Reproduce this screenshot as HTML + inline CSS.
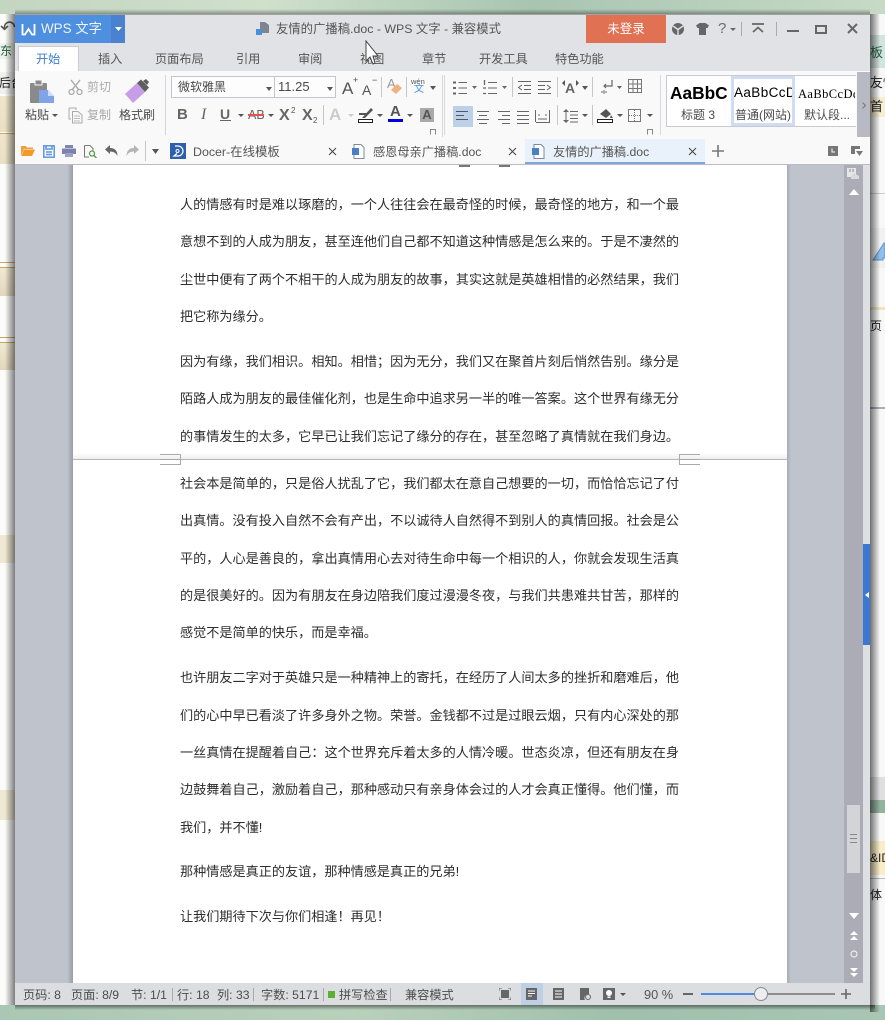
<!DOCTYPE html>
<html lang="zh"><head><meta charset="utf-8"><title>WPS 文字</title>
<style>
html,body{margin:0;padding:0;width:885px;height:1020px;overflow:hidden;background:#fff}
body{position:relative;font-family:"Liberation Sans","Noto Sans CJK SC",sans-serif;color:#444}
div,span,svg{position:absolute}
.l{white-space:nowrap;font-size:12px;line-height:16px;color:#4a4a4a}
.t{left:180px;width:499px;height:20px;margin-top:1px;line-height:20px;font-size:13.13px;color:#2e2e2e;white-space:nowrap;text-align:justify;text-align-last:justify;text-justify:inter-character}
.n{text-align-last:left}
.tab{font-size:12.2px;top:51px;line-height:16px;color:#555;white-space:nowrap}
.s{top:987px;font-size:12.2px;line-height:16px;color:#4c4c4c;white-space:nowrap}
.sep{width:1px;background:#c5c6ca}
</style></head><body>
<!-- background behind -->
<div style="left:0;top:0;width:885px;height:1020px;background:#fff"></div>
<div style="left:0;top:0;width:885px;height:14px;background:linear-gradient(90deg,#c3d6c2,#cfe0cb 30%,#a8c5b2 60%,#c7dac6)"></div>
<div style="left:0;top:1005px;width:885px;height:15px;background:linear-gradient(90deg,#a9c7b4,#b9d0bb 40%,#9fc0ac 70%,#a8c6b3)"></div>
<div style="left:0;top:14px;width:15px;height:991px;background:#fbfbfa"></div>
<div style="left:0;top:14px;width:15px;height:30px;font-size:19px;line-height:30px;color:#555;overflow:hidden">↶</div>
<div style="left:0;top:43px;width:15px;height:16px;background:#eef3ea;font-size:12px;line-height:16px;overflow:hidden;color:#264;white-space:nowrap">东</div>
<div style="left:0;top:72px;width:15px;height:22px;background:#f0f0ee;font-size:12px;line-height:22px;overflow:hidden;color:#222;white-space:nowrap;text-indent:-1px">后台</div>
<div style="left:0;top:96px;width:15px;height:36px;background:linear-gradient(#efe6cc,#e9dfc4)"></div>
<div style="left:0;top:133px;width:15px;height:1px;background:#c9a85e"></div>
<div style="left:0;top:134px;width:15px;height:30px;background:linear-gradient(#efe6cc,#e9dfc4)"></div>
<div style="left:0;top:262px;width:15px;height:1px;background:#c9a85e"></div>
<div style="left:0;top:267px;width:15px;height:28px;background:linear-gradient(#f1e9d2,#e0d7bd);border-top:1px solid #c9a85e"></div>
<div style="left:0;top:337px;width:15px;height:1px;background:#c9a85e"></div>
<div style="left:0;top:342px;width:15px;height:27px;background:linear-gradient(#f1e9d2,#e0d7bd);border-top:1px solid #c9a85e"></div>
<div style="left:0;top:535px;width:15px;height:28px;background:#efe8d3"></div>
<div style="left:0;top:790px;width:15px;height:30px;background:#efe8d3"></div>
<div style="left:870px;top:14px;width:15px;height:991px;background:#f8f8f8"></div>
<div style="left:870px;top:35px;width:15px;height:33px;background:#d3e3dd;font-size:13px;line-height:36px;color:#264;overflow:hidden;white-space:nowrap">板</div>
<div style="left:870px;top:70px;width:15px;height:26px;font-size:13px;line-height:26px;color:#222;overflow:hidden;white-space:nowrap">友情</div>
<div style="left:870px;top:97px;width:15px;height:20px;background:#f6eed0;font-size:13px;line-height:20px;color:#222;overflow:hidden;white-space:nowrap">首</div>
<div style="left:870px;top:193px;width:15px;height:1px;background:#ccc"></div>
<div style="left:870px;top:228px;width:15px;height:40px;background:#f1f1f2"></div>
<svg style="left:870px;top:240px" width="15" height="22"><path d="M3 20 L14 3 L15 3 L15 18 L13 18 L13 20Z" fill="#8fc0ea" stroke="#5a92c8"/></svg>
<div style="left:870px;top:307px;width:15px;height:3px;background:#efe3b8"></div>
<div style="left:870px;top:316px;width:15px;height:20px;font-size:12px;line-height:20px;color:#222;overflow:hidden;white-space:nowrap">页 ▾</div>
<div style="left:870px;top:407px;width:15px;height:2px;background:#a8adb8"></div>
<div style="left:870px;top:777px;width:15px;height:23px;background:#dfdfe1"></div>
<div style="left:870px;top:800px;width:15px;height:13px;background:#93b39f"></div>
<div style="left:870px;top:841px;width:15px;height:34px;background:#f8edc8;font-size:12px;line-height:34px;color:#222;overflow:hidden;white-space:nowrap">&amp;ID</div>
<div style="left:870px;top:878px;width:15px;height:1px;background:#bbb"></div>
<div style="left:870px;top:884px;width:15px;height:22px;font-size:12px;line-height:22px;color:#222;overflow:hidden;white-space:nowrap">体</div>
<!-- shadows -->
<div style="left:5px;top:14px;width:10px;height:991px;background:linear-gradient(90deg,rgba(0,0,0,0),rgba(0,0,0,.5))"></div>
<div style="left:870px;top:14px;width:10px;height:998px;background:linear-gradient(90deg,rgba(0,0,0,.55),rgba(0,0,0,0))"></div>
<div style="left:15px;top:1005px;width:860px;height:5px;background:linear-gradient(rgba(0,0,0,.45),rgba(0,0,0,0))"></div>
<div style="left:15px;top:9px;width:855px;height:6px;background:linear-gradient(rgba(0,0,0,0),rgba(0,0,0,.4))"></div>

<!-- window -->
<div style="left:15px;top:15px;width:855px;height:990px;background:#e1e2e5"></div>
<div style="left:15px;top:15px;width:96px;height:28px;background:#4f8fdf"></div>
<div style="left:111px;top:15px;width:14px;height:28px;background:#4a82cf"></div>
<svg style="left:21px;top:23px" width="15" height="13"><path d="M1.500 1 V11.500 H4 L7.500 6 L11 11.500 H13.500 V1" fill="none" stroke="#fff" stroke-width="1.800"/></svg>
<div class="l" style="left:41px;top:21px;color:#eef4fc;font-size:13.400px">WPS 文字</div>
<svg style="left:115px;top:27px" width="7" height="4"><path d="M0 0H7L3.500 4Z" fill="#fff"/></svg>
<svg style="left:255px;top:21px" width="15" height="15"><path d="M5 1H10L14 4V12H5Z" fill="#7e8591"/><rect x="1" y="8" width="6" height="6" fill="#4a90d9"/></svg>
<div class="l" style="left:276px;top:21px;font-size:12.350px;color:#555">友情的广播稿.doc - WPS 文字 - 兼容模式</div>
<div style="left:586px;top:15px;width:80px;height:28px;background:#e07153;color:#fff;font-size:12.500px;line-height:28px;text-align:center">未登录</div>
<svg style="left:671px;top:22px" width="14" height="14"><circle cx="7" cy="7" r="6" fill="#666"/><path d="M2 4L7 7.500L12 4M7 7.500V13" stroke="#e1e2e5" stroke-width="1.400" fill="none"/></svg>
<svg style="left:696px;top:23px" width="13" height="12"><path d="M3.500 0H9.500L13 2.500L11.500 5H10V12H3V5H1.500L0 2.500Z" fill="#666"/></svg>
<div style="left:718px;top:20px;font-size:15px;line-height:18px;color:#6a6a6a">?</div>
<svg style="left:730px;top:28px" width="6" height="3"><path d="M0 0H6L3 3Z" fill="#666"/></svg>
<div class="sep" style="left:741px;top:22px;height:14px;background:#aaa"></div>
<svg style="left:752px;top:23px" width="12" height="11"><path d="M0 1H12M1 9L6 4.500L11 9" stroke="#666" stroke-width="1.700" fill="none"/></svg>
<div class="sep" style="left:776px;top:22px;height:14px;background:#aaa"></div>
<div style="left:787px;top:30px;width:12px;height:2px;background:#666"></div>
<div style="left:815px;top:25px;width:8px;height:5px;border:2px solid #666;border-top-width:2px"></div>
<svg style="left:847px;top:23px" width="11" height="11"><path d="M1 1L10 10M10 1L1 10" stroke="#666" stroke-width="2"/></svg>

<!-- tabs -->
<div style="left:18px;top:46px;width:61px;height:25px;background:#fff;border:1px solid #c9cbd0;border-bottom:0;box-sizing:border-box"></div>
<div class="tab" style="left:36px;color:#3f80cc">开始</div>
<div class="tab" style="left:98px">插入</div>
<div class="tab" style="left:155px">页面布局</div>
<div class="tab" style="left:236px">引用</div>
<div class="tab" style="left:298px">审阅</div>
<div class="tab" style="left:360px">视图</div>
<div class="tab" style="left:422px">章节</div>
<div class="tab" style="left:479px">开发工具</div>
<div class="tab" style="left:555px">特色功能</div>
<svg style="left:365px;top:40px" width="14" height="26"><path d="M1 1V21L5 17L8 24L10 23L8 16H13Z" fill="#fff" stroke="#444" stroke-width="1"/></svg>

<!-- ribbon -->
<div style="left:15px;top:71px;width:855px;height:67px;background:#f9f9fa"></div>
<div style="left:15px;top:138px;width:855px;height:26px;background:#f9f9fa"></div>
<div style="left:15px;top:164px;width:855px;height:1px;background:#b9bcc6"></div>

<svg style="left:29px;top:79px" width="26" height="25"><rect x="1" y="4" width="17" height="20" rx="1" fill="#8a8a8a"/><rect x="6" y="1" width="7" height="5" fill="#8a8a8a" stroke="#f9f9fa"/><path d="M10 11H19L25 17V24H10Z" fill="#7fa4e8"/><path d="M19 11V17H25" fill="#cfdcf6"/></svg>
<div class="l" style="left:25px;top:107px">粘贴</div>
<svg style="left:52px;top:114px" width="6" height="3"><path d="M0 0H6L3 3Z" fill="#555"/></svg>
<svg style="left:68px;top:79px" width="15" height="16"><path d="M3 1L11 11M12 1L4 11" stroke="#b0b0b0" stroke-width="1.500"/><circle cx="3.500" cy="13" r="2.500" fill="none" stroke="#aaa" stroke-width="1.300"/><circle cx="11.500" cy="13" r="2.500" fill="none" stroke="#aaa" stroke-width="1.300"/></svg>
<div class="l" style="left:87px;top:79px;color:#aaa">剪切</div>
<svg style="left:68px;top:107px" width="15" height="17"><path d="M1 1H8V3M1 1V12H3" fill="none" stroke="#aaa"/><path d="M4.500 4.500H10L14 8V16H4.500Z" fill="#f9f9fa" stroke="#aaa"/><path d="M6 9H12M6 11.500H12M6 14H12" stroke="#bbb"/></svg>
<div class="l" style="left:87px;top:107px;color:#aaa">复制</div>
<svg style="left:124px;top:78px" width="26" height="26"><path d="M1 16L13 5L21 14L9 25Z" fill="#c79de8"/><path d="M13 5L17 1.500L25 9.500L21 14Z" fill="#5e5e5e"/><path d="M19 3L22 1L25 4L23 7Z" fill="#5e5e5e"/></svg>
<div class="l" style="left:119px;top:107px">格式刷</div>
<div class="sep" style="left:165px;top:75px;height:60px;background:#d4d5d8"></div>

<div style="left:171px;top:76px;width:165px;height:22px;border:1px solid #c3c5ca;box-sizing:border-box;background:#fdfdfd"></div>
<div class="sep" style="left:274px;top:76px;height:22px"></div>
<div class="l" style="left:178px;top:79px">微软雅黑</div>
<svg style="left:266px;top:87px" width="6" height="4"><path d="M0 0H6L3 4Z" fill="#555"/></svg>
<div class="l" style="left:278px;top:79px;font-size:13px">11.25</div>
<svg style="left:327px;top:87px" width="6" height="4"><path d="M0 0H6L3 4Z" fill="#555"/></svg>
<div class="l" style="left:342px;top:79px;font-size:17px;line-height:20px;color:#555">A</div>
<div class="l" style="left:353px;top:75px;font-size:9px;line-height:10px">+</div>
<div class="l" style="left:362px;top:81px;font-size:14px;line-height:18px;color:#555">A</div>
<div class="l" style="left:372px;top:75px;font-size:9px;line-height:10px">−</div>
<div class="sep" style="left:381px;top:77px;height:20px"></div>
<div class="l" style="left:387px;top:76px;font-size:13px;color:#999">A</div>
<svg style="left:391px;top:84px" width="11" height="10"><path d="M0 6L6 0L11 4L5 10Z" fill="#efb27c"/></svg>
<div class="sep" style="left:406px;top:77px;height:20px"></div>
<div class="l" style="left:411px;top:78px;font-size:7.500px;line-height:8px;color:#555">wén</div>
<div class="l" style="left:414px;top:84px;font-size:10px;line-height:12px;color:#4a90d9">文</div>
<svg style="left:430px;top:86px" width="6" height="4"><path d="M0 0H6L3 4Z" fill="#555"/></svg>
<div class="sep" style="left:442px;top:75px;height:62px;background:#d8d9dc"></div>

<div class="l" style="left:177px;top:107px;font-weight:bold;font-size:15px;color:#666">B</div>
<div class="l" style="left:201px;top:107px;font-family:'Liberation Serif',serif;font-style:italic;font-size:16px;color:#666">I</div>
<div class="l" style="left:220px;top:106px;font-weight:bold;font-size:14px;color:#666">U</div>
<div style="left:220px;top:120px;width:11px;height:1px;background:#666"></div>
<svg style="left:238px;top:114px" width="6" height="3"><path d="M0 0H6L3 3Z" fill="#555"/></svg>
<div class="l" style="left:248px;top:107px;font-size:12.500px;color:#666">AB</div>
<div style="left:248px;top:114px;width:16px;height:2px;background:#e85050"></div>
<svg style="left:268px;top:114px" width="6" height="3"><path d="M0 0H6L3 3Z" fill="#555"/></svg>
<div class="l" style="left:279px;top:108px;font-weight:bold;font-size:16px;color:#666">X</div><div class="l" style="left:291px;top:103px;font-size:8px;color:#555">2</div>
<div class="l" style="left:302px;top:108px;font-weight:bold;font-size:16px;color:#666">X</div><div class="l" style="left:313px;top:113px;font-size:8px;color:#555">2</div>
<div class="sep" style="left:323px;top:105px;height:20px"></div>
<div class="l" style="left:329px;top:107px;font-weight:bold;font-size:17px;color:#ccc">A</div>
<svg style="left:348px;top:114px" width="6" height="3"><path d="M0 0H6L3 3Z" fill="#ccc"/></svg>
<svg style="left:358px;top:106px" width="16" height="14"><path d="M1 8H9" stroke="#555" stroke-width="2"/><path d="M4 12L13 2L15 4L7 12Z" fill="#555"/></svg>
<div style="left:358px;top:119px;width:13px;height:2px;border:1px solid #222;background:#fff"></div>
<svg style="left:377px;top:114px" width="6" height="3"><path d="M0 0H6L3 3Z" fill="#555"/></svg>
<div class="l" style="left:390px;top:104px;font-size:15px;color:#555;font-weight:bold">A</div>
<div style="left:388px;top:119px;width:15px;height:3px;background:#0000d8"></div>
<svg style="left:407px;top:114px" width="6" height="3"><path d="M0 0H6L3 3Z" fill="#555"/></svg>
<div style="left:420px;top:108px;width:14px;height:14px;background:#a9a9aa;color:#555;font-weight:bold;font-size:13px;line-height:14px;text-align:center">A</div>
<svg style="left:430px;top:129px" width="6" height="6"><path d="M.5 5.500V.5H5.500V5.500" fill="none" stroke="#888"/></svg>
<div class="sep" style="left:444px;top:75px;height:60px;background:#d8d9dc"></div>

<!-- list icons -->
<svg style="left:453px;top:79px" width="110" height="18" fill="none" stroke="#666">
<path d="M5.500 3.500H14M5.500 9H14M5.500 14.500H14"/><path d="M0 3.500H3M0 9H3M0 14.500H3" stroke-width="2" stroke-dasharray="1.500 0"/>
<path d="M19 7H24L21.500 10Z" fill="#666" stroke="none"/>
<path d="M35 3.500H44M35 9H44M35 14.500H44"/><path d="M31.500 1V6M30 9H33M30 14.500H33" stroke-width="1.300"/>
<path d="M49 7H54L51.500 10Z" fill="#666" stroke="none"/>
<path d="M65 2.500H78M71 6.500H78M71 10.500H78M65 14.500H78"/><path d="M69 6L65.500 8.500L69 11"/>
<path d="M85 2.500H98M85 6.500H92M85 10.500H92M85 14.500H98"/><path d="M94 6L97.500 8.500L94 11"/>
</svg>
<div class="sep" style="left:512px;top:77px;height:20px"></div>
<div class="sep" style="left:557px;top:77px;height:20px"></div>
<div class="l" style="left:565px;top:80px;font-size:14px;font-weight:bold;color:#666">A</div>
<svg style="left:562px;top:80px" width="17" height="6" fill="#555"><path d="M0 3L3 0V6ZM17 3L14 0V6Z"/></svg>
<svg style="left:582px;top:86px" width="6" height="4"><path d="M0 0H6L3 4Z" fill="#555"/></svg>
<div class="sep" style="left:592px;top:77px;height:20px"></div>
<svg style="left:600px;top:79px" width="24" height="16" fill="none" stroke="#666"><path d="M12 1V7H4M6 5L4 7L6 9" stroke-width="1.200"/><path d="M1 13H3M5 13H7M4 11V15"/><path d="M17 7H22L19.500 10Z" fill="#666" stroke="none"/></svg>
<svg style="left:628px;top:79px" width="14" height="14" fill="none" stroke="#777"><path d="M.5.5H13.500V13.500H.5ZM.5 5H13.500M.5 9.500H13.500M5 .5V13.500M9.500 .5V13.500"/></svg>
<div style="left:453px;top:106px;width:20px;height:21px;background:#bcd0e8"></div>
<svg style="left:456px;top:109px" width="100" height="15" fill="none" stroke="#666">
<path d="M0 2.500H12M0 6.500H8M0 10.500H12" stroke="#556"/>
<path d="M21 2.500H33M23 6.500H31M21 10.500H33M23 14.500H31"/>
<path d="M42 2.500H54M46 6.500H54M42 10.500H54M46 14.500H54"/>
<path d="M61 2.500H73M61 6.500H73M61 10.500H73M61 14.500H73"/>
<path d="M79.500 1V13M93.500 1V13M80 13.500H94M82 6H84M89 6H91M82 10H91" />
</svg>
<div class="sep" style="left:557px;top:105px;height:20px"></div>
<svg style="left:563px;top:109px" width="15" height="14" fill="none" stroke="#666"><path d="M3 0L6 3H0ZM3 14L0 11H6Z" fill="#666" stroke="none"/><rect x="2.500" y="3" width="1" height="8" fill="#666" stroke="none"/><path d="M7 2.500H15M7 6H15M7 9.500H15M7 13H15"/></svg>
<svg style="left:582px;top:114px" width="6" height="3"><path d="M0 0H6L3 3Z" fill="#555"/></svg>
<div class="sep" style="left:592px;top:105px;height:20px"></div>
<svg style="left:597px;top:108px" width="16" height="15"><path d="M3 6L9 1L14 6L9 10Z" fill="#555"/><path d="M14 7L16 10H13Z" fill="#555"/><rect x=".5" y="11.500" width="15" height="3" fill="#fff" stroke="#222"/></svg>
<svg style="left:617px;top:114px" width="6" height="3"><path d="M0 0H6L3 3Z" fill="#555"/></svg>
<svg style="left:628px;top:109px" width="13" height="13" fill="none" stroke="#777"><rect x=".5" y=".5" width="12" height="12"/><path d="M6.500 1V12M1 6.500H12" stroke-dasharray="1 1"/></svg>
<svg style="left:647px;top:114px" width="6" height="3"><path d="M0 0H6L3 3Z" fill="#555"/></svg>
<svg style="left:647px;top:129px" width="6" height="6"><path d="M.5 5.500V.5H5.500V5.500" fill="none" stroke="#888"/></svg>
<div class="sep" style="left:660px;top:75px;height:60px;background:#d8d9dc"></div>

<!-- styles gallery -->
<div style="left:666px;top:75px;width:190px;height:52px;background:#fff;border:1px solid #c9cad0;box-sizing:border-box;border-right:0"></div>
<div style="left:731px;top:76px;width:64px;height:50px;background:#cfdcf4"></div>
<div style="left:734px;top:79px;width:58px;height:44px;background:#fff"></div>
<div style="left:670px;top:82px;font-weight:bold;font-size:17.300px;line-height:22px;color:#000;white-space:nowrap">AaBbC</div>
<div class="l" style="left:681px;top:107px">标题 3</div>
<div style="left:734px;top:84px;width:58px;overflow:hidden;font-size:13.500px;line-height:18px;color:#000;white-space:nowrap;letter-spacing:.4px">AaBbCcD</div>
<div class="l" style="left:735px;top:107px">普通(网站)</div>
<div style="left:798px;top:85px;width:57px;overflow:hidden;font-family:'Liberation Serif',serif;font-size:12.500px;line-height:18px;color:#000;white-space:nowrap;letter-spacing:.4px">AaBbCcDd</div>
<div class="l" style="left:804px;top:107px">默认段...</div>
<div style="left:857px;top:72px;width:13px;height:65px;background:#b7bac3"></div>
<svg style="left:862px;top:102px" width="4" height="7"><path d="M.5.5L3.500 3.500L.5 6.500" fill="none" stroke="#777"/></svg>

<!-- quick access -->
<svg style="left:21px;top:145px" width="14" height="11"><path d="M0 1H5L6 2.500H12V4H3L0 11Z" fill="#f0a040"/><path d="M3 4.500H14L11 11H.5Z" fill="#f29a25"/></svg>
<svg style="left:43px;top:145px" width="12" height="13" fill="none" stroke="#5f96dc" stroke-width="1.500"><rect x=".8" y=".8" width="10.400" height="11.400"/><path d="M3 1V4H9V1M3 7H9M3 9.500H9"/></svg>
<svg style="left:62px;top:145px" width="14" height="12"><rect x="3" y="0" width="8" height="3" fill="#8186ad"/><rect x="0" y="3.500" width="14" height="5.500" fill="#7d82ad"/><rect x="3" y="8" width="8" height="4" fill="#9ea2c2"/></svg>
<svg style="left:84px;top:145px" width="13" height="13"><path d="M.5.5H6L9 3.500V6M.5.5V12H5" fill="none" stroke="#777"/><circle cx="8" cy="8.500" r="2.500" fill="none" stroke="#5aa050" stroke-width="1.300"/><path d="M10 10.500L12.500 13" stroke="#5aa050" stroke-width="1.500"/></svg>
<svg style="left:105px;top:145px" width="13" height="11"><path d="M0 4.500L5 0V3C10 3 12.500 6 12.500 11C11 8 8.500 6.500 5 6.500V9Z" fill="#666"/></svg>
<svg style="left:126px;top:145px" width="13" height="11"><path d="M13 4.500L8 0V3C3 3 .5 6 .5 11C2 8 4.500 6.500 8 6.500V9Z" fill="#b5b5b5"/></svg>
<div class="sep" style="left:145px;top:141px;height:20px"></div>
<svg style="left:152px;top:149px" width="7" height="5"><path d="M0 0H7L3.500 5Z" fill="#555"/></svg>
<div style="left:170px;top:143px;width:16px;height:16px;background:#2d5faa"></div>
<svg style="left:172px;top:145px" width="12" height="12"><path d="M3 1H6C9 1 11 3.500 11 6S9 11 6 11H2L5 8.500" fill="none" stroke="#fff" stroke-width="1.300"/><circle cx="5.500" cy="6" r="1.500" fill="none" stroke="#fff"/></svg>
<div class="l" style="left:193px;top:144px;color:#555;font-size:12.400px">Docer-在线模板</div>
<svg style="left:328px;top:147px" width="9" height="9"><path d="M1 1L8 8M8 1L1 8" stroke="#444"/></svg>
<svg style="left:351px;top:144px" width="14" height="15"><path d="M3 .5H10L13 3.500V14.500H3Z" fill="#fff" stroke="#7d8aa0"/><rect x="1" y="4" width="7" height="7" fill="#4a7fc5"/></svg>
<div class="l" style="left:373px;top:144px;color:#555;font-size:12.200px">感恩母亲广播稿.doc</div>
<svg style="left:508px;top:147px" width="9" height="9"><path d="M1 1L8 8M8 1L1 8" stroke="#444"/></svg>
<div style="left:525px;top:139px;width:180px;height:25px;background:#e9f1fa"></div>
<div style="left:525px;top:162px;width:180px;height:2px;background:#7ea6d8"></div>
<svg style="left:531px;top:144px" width="14" height="15"><path d="M3 .5H10L13 3.500V14.500H3Z" fill="#fff" stroke="#7d8aa0"/><rect x="1" y="4" width="7" height="7" fill="#4a7fc5"/></svg>
<div class="l" style="left:553px;top:144px;color:#555;font-size:12.200px">友情的广播稿.doc</div>
<svg style="left:688px;top:147px" width="9" height="9"><path d="M1 1L8 8M8 1L1 8" stroke="#444"/></svg>
<svg style="left:712px;top:145px" width="12" height="12"><path d="M6 0V12M0 6H12" stroke="#777" stroke-width="1.600"/></svg>
<svg style="left:828px;top:146px" width="10" height="10"><rect width="10" height="10" fill="#777"/><path d="M4 2.500V6H7" stroke="#fff" fill="none"/></svg>
<svg style="left:851px;top:146px" width="12" height="11"><path d="M0 0H9V3H4V8H0Z" fill="#777"/><path d="M5 5H12L8.500 10Z" fill="#777"/></svg>

<!-- doc area -->
<div style="left:15px;top:165px;width:829px;height:818px;background:#bfc3cc"></div>
<div style="left:67px;top:165px;width:6px;height:818px;background:linear-gradient(90deg,rgba(120,125,140,0),rgba(120,125,140,.55))"></div>
<div style="left:787px;top:165px;width:4px;height:818px;background:linear-gradient(90deg,rgba(120,125,140,.35),rgba(120,125,140,0))"></div>
<div style="left:73px;top:165px;width:714px;height:818px;background:#fff"></div>
<div style="left:73px;top:453px;width:714px;height:6px;background:linear-gradient(rgba(0,0,0,0),rgba(0,0,0,.07))"></div>
<div style="left:73px;top:459px;width:714px;height:1px;background:#b7b7bb"></div>
<svg style="left:160px;top:454px" width="21" height="11" fill="none" stroke="#aaa"><path d="M0 .5H20.500V10.500H0M0 5.500H20.500"/></svg>
<svg style="left:679px;top:454px" width="21" height="11" fill="none" stroke="#aaa"><path d="M21 .5H.5V10.500H21M21 5.500H.5"/></svg>
<div style="left:459px;top:165px;width:11px;height:2px;background:#777"></div>
<div style="left:499px;top:165px;width:11px;height:2px;background:#777"></div>

<div class="t" style="top:194px">人的情感有时是难以琢磨的，一个人往往会在最奇怪的时候，最奇怪的地方，和一个最</div>
<div class="t" style="top:231px">意想不到的人成为朋友，甚至连他们自己都不知道这种情感是怎么来的。于是不凄然的</div>
<div class="t" style="top:269px">尘世中便有了两个不相干的人成为朋友的故事，其实这就是英雄相惜的必然结果，我们</div>
<div class="t n" style="top:306px">把它称为缘分。</div>
<div class="t" style="top:351px">因为有缘，我们相识。相知。相惜；因为无分，我们又在聚首片刻后悄然告别。缘分是</div>
<div class="t" style="top:388px">陌路人成为朋友的最佳催化剂，也是生命中追求另一半的唯一答案。这个世界有缘无分</div>
<div class="t" style="top:426px">的事情发生的太多，它早已让我们忘记了缘分的存在，甚至忽略了真情就在我们身边。</div>
<div class="t" style="top:473px">社会本是简单的，只是俗人扰乱了它，我们都太在意自己想要的一切，而恰恰忘记了付</div>
<div class="t" style="top:510px">出真情。没有投入自然不会有产出，不以诚待人自然得不到别人的真情回报。社会是公</div>
<div class="t" style="top:548px">平的，人心是善良的，拿出真情用心去对待生命中每一个相识的人，你就会发现生活真</div>
<div class="t" style="top:585px">的是很美好的。因为有朋友在身边陪我们度过漫漫冬夜，与我们共患难共甘苦，那样的</div>
<div class="t n" style="top:622px">感觉不是简单的快乐，而是幸福。</div>
<div class="t" style="top:667px">也许朋友二字对于英雄只是一种精神上的寄托，在经历了人间太多的挫折和磨难后，他</div>
<div class="t" style="top:705px">们的心中早已看淡了许多身外之物。荣誉。金钱都不过是过眼云烟，只有内心深处的那</div>
<div class="t" style="top:742px">一丝真情在提醒着自己：这个世界充斥着太多的人情冷暖。世态炎凉，但还有朋友在身</div>
<div class="t" style="top:779px">边鼓舞着自己，激励着自己，那种感动只有亲身体会过的人才会真正懂得。他们懂，而</div>
<div class="t n" style="top:817px">我们，并不懂!</div>
<div class="t n" style="top:861px">那种情感是真正的友谊，那种情感是真正的兄弟!</div>
<div class="t n" style="top:906px">让我们期待下次与你们相逢！再见！</div>

<!-- scrollbar -->
<div style="left:844px;top:165px;width:19px;height:818px;background:#abacb6"></div>
<div style="left:863px;top:165px;width:7px;height:818px;background:#dedfe2"></div>
<div style="left:863px;top:544px;width:7px;height:101px;background:#3c78d0"></div>
<svg style="left:865px;top:592px" width="4" height="6"><path d="M4 0V6L0 3Z" fill="#fff"/></svg>
<svg style="left:847px;top:168px" width="12" height="12"><path d="M0 0H9V9H0Z" fill="#e5e6ea"/><path d="M3 1V4M6 1V4" stroke="#888"/><path d="M4 11V8L7 5L12 8V11Z" fill="#d9dade"/></svg>
<svg style="left:849px;top:189px" width="10" height="6"><path d="M5 0L10 6H0Z" fill="#fff"/></svg>
<div style="left:847px;top:805px;width:13px;height:68px;background:#d3d4d8"></div>
<div style="left:850px;top:834px;width:7px;height:1px;background:#888"></div>
<div style="left:850px;top:838px;width:7px;height:1px;background:#888"></div>
<div style="left:850px;top:842px;width:7px;height:1px;background:#888"></div>
<svg style="left:849px;top:913px" width="10" height="6"><path d="M0 0H10L5 6Z" fill="#fff"/></svg>
<svg style="left:850px;top:931px" width="8" height="10" fill="#fff"><path d="M4 0L8 4H0ZM4 5L8 9H0Z"/></svg>
<svg style="left:850px;top:950px" width="8" height="8"><circle cx="4" cy="4" r="3" fill="none" stroke="#eee" stroke-width="1.200"/></svg>
<svg style="left:850px;top:968px" width="8" height="10" fill="#fff"><path d="M0 0H8L4 4ZM0 5H8L4 9Z"/></svg>

<!-- status bar -->
<div style="left:15px;top:983px;width:855px;height:22px;background:#dcdde0"></div>
<div class="s" style="left:23px">页码: 8</div>
<div class="s" style="left:71px">页面: 8/9</div>
<div class="s" style="left:131px">节: 1/1</div>
<div class="sep" style="left:172px;top:988px;height:13px;background:#aaa"></div>
<div class="s" style="left:177px">行: 18</div>
<div class="s" style="left:217px">列: 33</div>
<div class="sep" style="left:253px;top:988px;height:13px;background:#aaa"></div>
<div class="s" style="left:261px">字数: 5171</div>
<div class="sep" style="left:323px;top:988px;height:13px;background:#aaa"></div>
<div style="left:328px;top:991px;width:7px;height:7px;background:#5cb030"></div>
<div class="s" style="left:339px">拼写检查</div>
<div class="sep" style="left:390px;top:988px;height:13px;background:#aaa"></div>
<div class="s" style="left:405px">兼容模式</div>
<svg style="left:499px;top:988px" width="12" height="12"><rect x="2" y="2" width="8" height="8" fill="#666"/><path d="M0 3V0H3M9 0H12V3M12 9V12H9M3 12H0V9" fill="none" stroke="#666"/></svg>
<div style="left:521px;top:983px;width:22px;height:22px;background:#bfd0e6"></div>
<svg style="left:526px;top:988px" width="11" height="12"><rect width="11" height="12" fill="#666"/><path d="M2 3H9M2 5.500H9M2 8H6" stroke="#fff"/></svg>
<svg style="left:553px;top:988px" width="11" height="12"><rect width="11" height="12" fill="#666"/><path d="M2 3H9M2 6H9M2 9H9" stroke="#fff"/></svg>
<svg style="left:580px;top:988px" width="11" height="12"><path d="M0 0H9V6A4 4 0 0 0 5 12H0Z" fill="#666"/><circle cx="8" cy="9" r="2.500" fill="none" stroke="#666"/></svg>
<svg style="left:603px;top:988px" width="12" height="12"><rect width="12" height="12" fill="#666"/><circle cx="6" cy="5" r="3" fill="#fff"/><rect x="4.500" y="8.500" width="3" height="1.500" fill="#fff"/></svg>
<svg style="left:620px;top:993px" width="6" height="3"><path d="M0 0H6L3 3Z" fill="#555"/></svg>
<div class="s" style="left:644px;font-size:12.800px;color:#555">90 %</div>
<div style="left:683px;top:993px;width:10px;height:2px;background:#666"></div>
<div style="left:701px;top:993px;width:60px;height:2px;background:#4a8ae0"></div>
<div style="left:761px;top:993px;width:74px;height:2px;background:#8d8d90"></div>
<div style="left:754px;top:987px;width:12px;height:12px;border-radius:50%;background:#eeeef0;border:1px solid #8b8b8e"></div>
<svg style="left:841px;top:989px" width="10" height="10"><path d="M5 0V10M0 5H10" stroke="#666" stroke-width="1.600"/></svg>
</body></html>
